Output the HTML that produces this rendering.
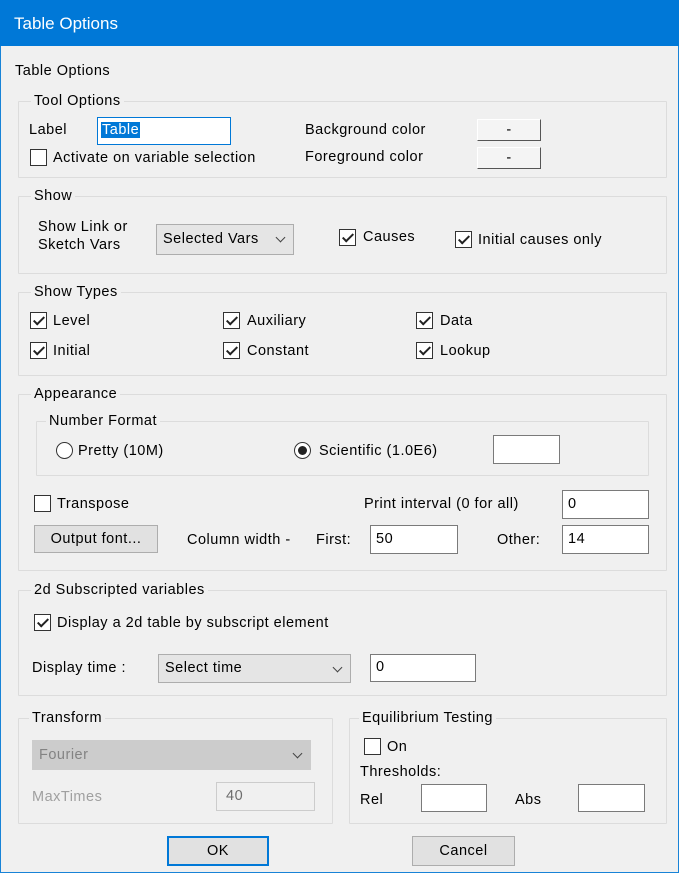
<!DOCTYPE html>
<html><head><style>
*{box-sizing:border-box;margin:0;padding:0}
body{width:679px;height:873px;background:#f0f0f0;font-family:"Liberation Sans",sans-serif;font-size:14.5px;letter-spacing:0.5px;color:#000;position:relative;overflow:hidden;border:1px solid #1883d7}
.a{position:absolute;white-space:nowrap;line-height:18px}
.g{position:absolute;border:1px solid #dcdcdc;border-radius:1px}
.lg{position:absolute;background:#f0f0f0;padding:0 3px;line-height:18px;white-space:nowrap}
.in{position:absolute;background:#fff;border:1px solid #7a7a7a;padding:3px 5px;line-height:20px}
.cb{position:absolute;width:17px;height:17px;border:1px solid #333;background:#fff}
.cb.k::after{content:"";position:absolute;left:5px;top:1px;width:4px;height:9px;border:solid #222;border-width:0 2px 2px 0;transform:rotate(45deg)}
.bt{position:absolute;background:#e1e1e1;border:1px solid #adadad;text-align:center}
.sel{position:absolute;background:#e5e5e5;border:1px solid #adadad;padding-left:6px;line-height:28px}
.sel::after{content:"";position:absolute;right:9px;top:9px;width:6px;height:6px;border:solid #444;border-width:0 1.5px 1.5px 0;transform:rotate(45deg)}
.rd{position:absolute;width:17px;height:17px;border:1px solid #333;border-radius:50%;background:#fff}
</style></head><body>
<div style="position:absolute;left:-1px;top:-1px;width:679px;height:46px;background:#0078d7"></div>
<div class="a" style="left:13px;top:14px;color:#fff;font-size:17px;letter-spacing:0">Table Options</div>
<div class="a" style="left:14px;top:61px">Table Options</div>

<div class="g" style="left:17px;top:100px;width:649px;height:77px"></div>
<div class="lg" style="left:30px;top:91px">Tool Options</div>
<div class="a" style="left:28px;top:120px">Label</div>
<div class="in" style="left:96px;top:116px;width:134px;height:28px;border:1px solid #0078d7;padding:2px 3px"><span style="background:#0078d7;color:#fff;padding:0 1px">Table</span></div>
<div class="cb" style="left:29px;top:148px"></div>
<div class="a" style="left:52px;top:148px">Activate on variable selection</div>
<div class="a" style="left:304px;top:120px">Background color</div>
<div class="bt" style="left:476px;top:118px;width:64px;height:22px;line-height:20px;background:#f4f4f4;border-color:#fff #555 #555 #fff">-</div>
<div class="a" style="left:304px;top:147px">Foreground color</div>
<div class="bt" style="left:476px;top:146px;width:64px;height:22px;line-height:20px;background:#f4f4f4;border-color:#fff #555 #555 #fff">-</div>

<div class="g" style="left:17px;top:195px;width:649px;height:78px"></div>
<div class="lg" style="left:30px;top:186px">Show</div>
<div class="a" style="left:37px;top:217px">Show Link or</div>
<div class="a" style="left:37px;top:235px">Sketch Vars</div>
<div class="sel" style="left:155px;top:223px;width:138px;height:31px">Selected Vars</div>
<div class="cb k" style="left:338px;top:228px"></div>
<div class="a" style="left:362px;top:227px">Causes</div>
<div class="cb k" style="left:454px;top:230px"></div>
<div class="a" style="left:477px;top:230px">Initial causes only</div>

<div class="g" style="left:17px;top:291px;width:649px;height:84px"></div>
<div class="lg" style="left:30px;top:282px">Show Types</div>
<div class="cb k" style="left:29px;top:311px"></div><div class="a" style="left:52px;top:311px">Level</div>
<div class="cb k" style="left:222px;top:311px"></div><div class="a" style="left:246px;top:311px">Auxiliary</div>
<div class="cb k" style="left:415px;top:311px"></div><div class="a" style="left:439px;top:311px">Data</div>
<div class="cb k" style="left:29px;top:341px"></div><div class="a" style="left:52px;top:341px">Initial</div>
<div class="cb k" style="left:222px;top:341px"></div><div class="a" style="left:246px;top:341px">Constant</div>
<div class="cb k" style="left:415px;top:341px"></div><div class="a" style="left:439px;top:341px">Lookup</div>

<div class="g" style="left:17px;top:393px;width:649px;height:177px"></div>
<div class="lg" style="left:30px;top:384px">Appearance</div>
<div class="g" style="left:35px;top:420px;width:613px;height:55px"></div>
<div class="lg" style="left:45px;top:411px">Number Format</div>
<div class="rd" style="left:55px;top:441px"></div>
<div class="a" style="left:77px;top:441px">Pretty (10M)</div>
<div class="rd" style="left:293px;top:441px"><div style="position:absolute;left:3px;top:3px;width:9px;height:9px;border-radius:50%;background:#222"></div></div>
<div class="a" style="left:318px;top:441px">Scientific (1.0E6)</div>
<div class="in" style="left:492px;top:434px;width:67px;height:29px"></div>
<div class="cb" style="left:33px;top:494px"></div>
<div class="a" style="left:56px;top:494px">Transpose</div>
<div class="a" style="left:363px;top:494px">Print interval (0 for all)</div>
<div class="in" style="left:561px;top:489px;width:87px;height:29px">0</div>
<div class="bt" style="left:33px;top:524px;width:124px;height:28px;line-height:26px">Output font...</div>
<div class="a" style="left:186px;top:530px">Column width -</div>
<div class="a" style="left:315px;top:530px">First:</div>
<div class="in" style="left:369px;top:524px;width:88px;height:29px">50</div>
<div class="a" style="left:496px;top:530px">Other:</div>
<div class="in" style="left:561px;top:524px;width:87px;height:29px">14</div>

<div class="g" style="left:17px;top:589px;width:649px;height:106px"></div>
<div class="lg" style="left:30px;top:580px">2d Subscripted variables</div>
<div class="cb k" style="left:33px;top:613px"></div>
<div class="a" style="left:56px;top:613px">Display a 2d table by subscript element</div>
<div class="a" style="left:31px;top:658px">Display time :</div>
<div class="sel" style="left:157px;top:653px;width:193px;height:29px;line-height:27px">Select time</div>
<div class="in" style="left:369px;top:653px;width:106px;height:28px;padding-top:2px">0</div>

<div class="g" style="left:17px;top:717px;width:315px;height:106px"></div>
<div class="lg" style="left:28px;top:708px">Transform</div>
<div class="sel" style="left:31px;top:739px;width:279px;height:30px;background:#ccc;border-color:#ccc;color:#838383">Fourier</div>
<div class="a" style="left:31px;top:787px;color:#a0a0a0">MaxTimes</div>
<div class="in" style="left:215px;top:781px;width:99px;height:29px;background:#f0f0f0;border-color:#ccc;color:#6d6d6d;padding-left:9px">40</div>

<div class="g" style="left:348px;top:717px;width:318px;height:106px"></div>
<div class="lg" style="left:358px;top:708px">Equilibrium Testing</div>
<div class="cb" style="left:363px;top:737px"></div>
<div class="a" style="left:386px;top:737px">On</div>
<div class="a" style="left:359px;top:762px">Thresholds:</div>
<div class="a" style="left:359px;top:790px">Rel</div>
<div class="in" style="left:420px;top:783px;width:66px;height:28px"></div>
<div class="a" style="left:514px;top:790px">Abs</div>
<div class="in" style="left:577px;top:783px;width:67px;height:28px"></div>

<div class="bt" style="left:166px;top:835px;width:102px;height:30px;line-height:26px;border:2px solid #0078d7">OK</div>
<div class="bt" style="left:411px;top:835px;width:103px;height:30px;line-height:28px">Cancel</div>
</body></html>
